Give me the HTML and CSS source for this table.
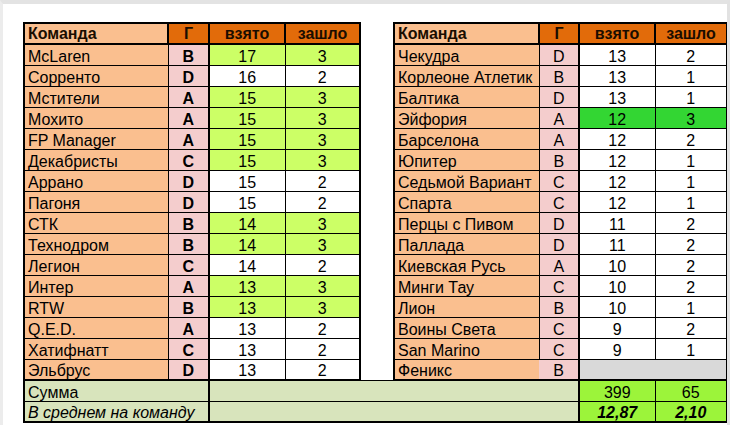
FILE: index.html
```html
<!DOCTYPE html>
<html lang="ru">
<head>
<meta charset="utf-8">
<title>Таблица команд</title>
<link rel="stylesheet" href="styles.css">
</head>
<body>
<div class="sheet">
<table class="grid">
  <colgroup>
    <col class="c-name"><col class="c-g"><col class="c-v"><col class="c-z">
    <col class="c-gap">
    <col class="c-name2"><col class="c-g2"><col class="c-v"><col class="c-z2">
  </colgroup>
  <thead>
    <tr class="head">
      <th class="name lt">Команда</th><th class="g">Г</th><th class="v">взято</th><th class="z rt">зашло</th>
      <th class="gap"></th>
      <th class="name lt">Команда</th><th class="g">Г</th><th class="v">взято</th><th class="z rt">зашло</th>
    </tr>
  </thead>
  <tbody>
    <tr><td class="name lt">McLaren</td><td class="g b">B</td><td class="v lime">17</td><td class="z rt lime">3</td><td class="gap"></td><td class="name lt">Чекудра</td><td class="g">D</td><td class="v">13</td><td class="z rt">2</td></tr>
    <tr><td class="name lt">Сорренто</td><td class="g b">D</td><td class="v">16</td><td class="z rt">2</td><td class="gap"></td><td class="name lt">Корлеоне Атлетик</td><td class="g">B</td><td class="v">13</td><td class="z rt">1</td></tr>
    <tr><td class="name lt">Мстители</td><td class="g b">A</td><td class="v lime">15</td><td class="z rt lime">3</td><td class="gap"></td><td class="name lt">Балтика</td><td class="g">D</td><td class="v">13</td><td class="z rt">1</td></tr>
    <tr><td class="name lt">Мохито</td><td class="g b">A</td><td class="v lime">15</td><td class="z rt lime">3</td><td class="gap"></td><td class="name lt">Эйфория</td><td class="g">A</td><td class="v bright">12</td><td class="z rt bright">3</td></tr>
    <tr><td class="name lt">FP Manager</td><td class="g b">A</td><td class="v lime">15</td><td class="z rt lime">3</td><td class="gap"></td><td class="name lt">Барселона</td><td class="g">A</td><td class="v">12</td><td class="z rt">2</td></tr>
    <tr><td class="name lt">Декабристы</td><td class="g b">C</td><td class="v lime">15</td><td class="z rt lime">3</td><td class="gap"></td><td class="name lt">Юпитер</td><td class="g">B</td><td class="v">12</td><td class="z rt">1</td></tr>
    <tr><td class="name lt">Аррано</td><td class="g b">D</td><td class="v">15</td><td class="z rt">2</td><td class="gap"></td><td class="name lt">Седьмой Вариант</td><td class="g">C</td><td class="v">12</td><td class="z rt">1</td></tr>
    <tr><td class="name lt">Пагоня</td><td class="g b">D</td><td class="v">15</td><td class="z rt">2</td><td class="gap"></td><td class="name lt">Спарта</td><td class="g">C</td><td class="v">12</td><td class="z rt">1</td></tr>
    <tr><td class="name lt">СТК</td><td class="g b">B</td><td class="v lime">14</td><td class="z rt lime">3</td><td class="gap"></td><td class="name lt">Перцы с Пивом</td><td class="g">D</td><td class="v">11</td><td class="z rt">2</td></tr>
    <tr><td class="name lt">Технодром</td><td class="g b">B</td><td class="v lime">14</td><td class="z rt lime">3</td><td class="gap"></td><td class="name lt">Паллада</td><td class="g">D</td><td class="v">11</td><td class="z rt">2</td></tr>
    <tr><td class="name lt">Легион</td><td class="g b">C</td><td class="v">14</td><td class="z rt">2</td><td class="gap"></td><td class="name lt">Киевская Русь</td><td class="g">A</td><td class="v">10</td><td class="z rt">2</td></tr>
    <tr><td class="name lt">Интер</td><td class="g b">A</td><td class="v lime">13</td><td class="z rt lime">3</td><td class="gap"></td><td class="name lt">Минги Тау</td><td class="g">C</td><td class="v">10</td><td class="z rt">2</td></tr>
    <tr><td class="name lt">RTW</td><td class="g b">B</td><td class="v lime">13</td><td class="z rt lime">3</td><td class="gap"></td><td class="name lt">Лион</td><td class="g">B</td><td class="v">10</td><td class="z rt">1</td></tr>
    <tr><td class="name lt">Q.E.D.</td><td class="g b">A</td><td class="v">13</td><td class="z rt">2</td><td class="gap"></td><td class="name lt">Воины Света</td><td class="g">C</td><td class="v">9</td><td class="z rt">2</td></tr>
    <tr><td class="name lt">Хатифнатт</td><td class="g b">C</td><td class="v">13</td><td class="z rt">2</td><td class="gap"></td><td class="name lt">San Marino</td><td class="g">C</td><td class="v">9</td><td class="z rt">1</td></tr>
    <tr class="last"><td class="name lt">Эльбрус</td><td class="g b">D</td><td class="v">13</td><td class="z rt">2</td><td class="gap"></td><td class="name lt open">Феникс</td><td class="g open">B</td><td class="v rt blank" colspan="2"></td></tr>
  </tbody>
  <tfoot>
    <tr class="sum"><td class="label lt" colspan="2">Сумма</td><td class="fill" colspan="5"></td><td class="total v">399</td><td class="total z rt">65</td></tr>
    <tr class="avg"><td class="label lt" colspan="2">В среднем на команду</td><td class="fill" colspan="5"></td><td class="total v">12,87</td><td class="total z rt">2,10</td></tr>
  </tfoot>
</table>
</div>
</body>
</html>
```

FILE: styles.css
```css
html, body {
  margin: 0;
  padding: 0;
}
body {
  background: #ffffff;
  border-top: 4px solid #e3e3e3;
  border-left: 3px solid #ececec;
  border-right: 3px solid #e2e2e2;
  width: 724px;
  height: 421px;
  overflow: hidden;
  font-family: "Liberation Sans", Arial, sans-serif;
  font-size: 16px;
  color: #000;
}
.sheet {
  padding: 18px 0 0 20px;
}
.grid {
  border-collapse: collapse;
  table-layout: fixed;
  width: 703px;
}
.c-name { width: 144px; }
.c-g { width: 41px; }
.c-v { width: 76px; }
.c-z { width: 75px; }
.c-gap { width: 34px; }
.c-name2 { width: 145px; }
.c-g2 { width: 40px; }
.c-z2 { width: 72px; }

.grid tr { height: 21px; }
.grid th, .grid td {
  padding: 0;
  line-height: 16px;
  vertical-align: bottom;
  border: 1px solid #000;
  white-space: nowrap;
  overflow: hidden;
}
.grid .gap {
  border: none;
  background: #fff;
}
.head th {
  background: #e26b0a;
  color: #1a0d00;
  font-weight: bold;
  text-align: center;
  border-top: 2px solid #000;
  border-bottom: 2px solid #000;
  border-right-width: 2px;
  padding-bottom: 1px;
}
.head th.name { text-align: left; }
.grid .name {
  background: #fabf8f;
  text-align: left;
  padding-left: 3px;
}
.grid .lt { border-left: 2px solid #000; }
.grid .rt { border-right: 2px solid #000; }
.grid .g {
  background: #f4cdcd;
  text-align: center;
  border-right: 2px solid #000;
}
.head th.g { background: #e26b0a; }
.grid .b { font-weight: bold; }
.grid .v, .grid .z { text-align: center; }
.grid .lime { background: #ccff66; }
.grid .bright { background: #33d633; }
.grid .blank { background: #d9d9d9; }
.grid td.name.open { border-left: 2px solid #000; border-right: none; }
.grid td.g.open { border-left: none; }
.last td { border-bottom: 2px solid #000; }
.last td.gap { border: none; }

.sum td, .avg td { background: #d8e4bc; }
.grid .label {
  text-align: left;
  padding-left: 3px;
  border-right: 2px solid #000;
}
.grid .fill { border-right: 2px solid #000; }
.grid .total {
  background: #9cf43a;
  text-align: center;
}
.avg td { border-bottom: 2px solid #000; }
.avg .label { font-style: italic; }
.avg .total { font-style: italic; font-weight: bold; }
```
